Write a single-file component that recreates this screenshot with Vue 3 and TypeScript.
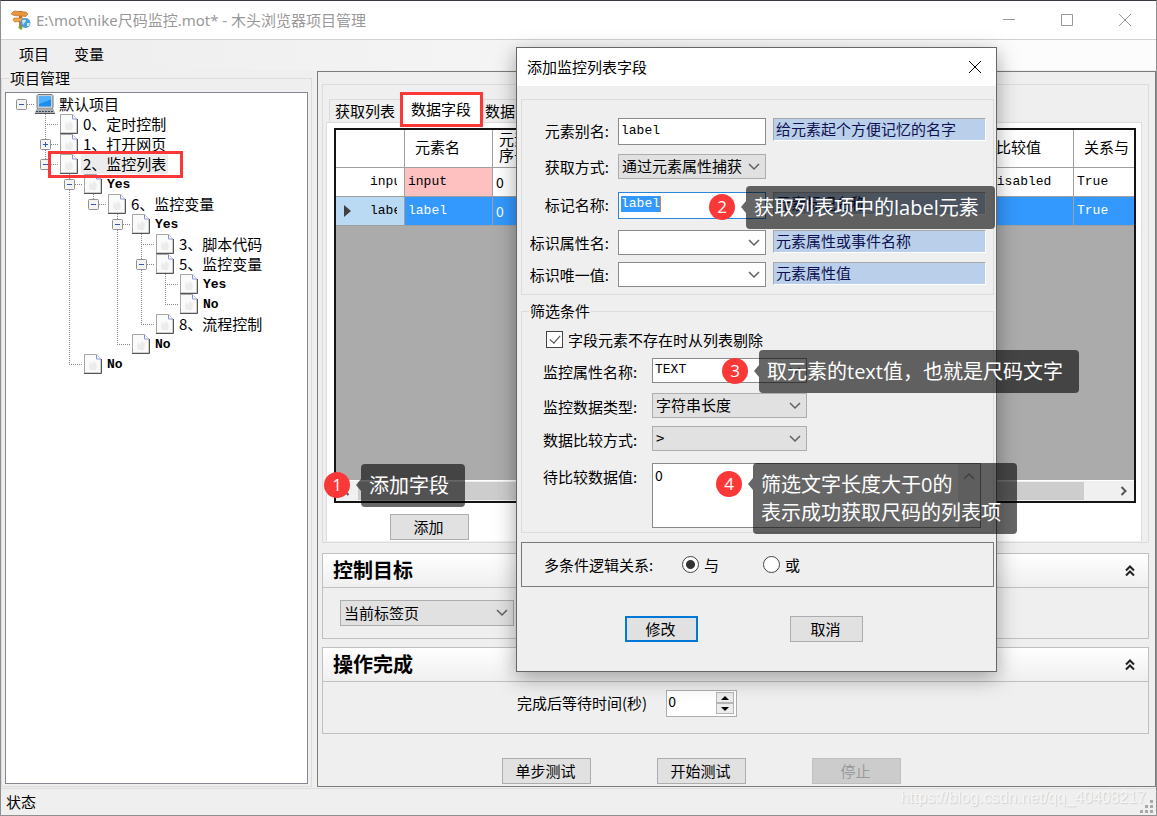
<script setup lang="ts">
import { ref } from 'vue'

interface TreeNode {
  depth: number
  label: string
  kind: 'root' | 'page'
  toggle?: 'plus' | 'minus'
  latin?: boolean
  current?: boolean
}

const nodes: TreeNode[] = [
  { depth: 0, label: '默认项目', kind: 'root', toggle: 'minus' },
  { depth: 1, label: '0、定时控制', kind: 'page' },
  { depth: 1, label: '1、打开网页', kind: 'page', toggle: 'plus' },
  { depth: 1, label: '2、监控列表', kind: 'page', toggle: 'minus', current: true },
  { depth: 2, label: 'Yes', kind: 'page', toggle: 'minus', latin: true },
  { depth: 3, label: '6、监控变量', kind: 'page', toggle: 'minus' },
  { depth: 4, label: 'Yes', kind: 'page', toggle: 'minus', latin: true },
  { depth: 5, label: '3、脚本代码', kind: 'page' },
  { depth: 5, label: '5、监控变量', kind: 'page', toggle: 'minus' },
  { depth: 6, label: 'Yes', kind: 'page', latin: true },
  { depth: 6, label: 'No', kind: 'page', latin: true },
  { depth: 5, label: '8、流程控制', kind: 'page' },
  { depth: 4, label: 'No', kind: 'page', latin: true },
  { depth: 2, label: 'No', kind: 'page', latin: true },
]

function continues(index: number, column: number): boolean {
  for (let i = index + 1; i < nodes.length; i++) {
    if (nodes[i].depth < column) return false
    if (nodes[i].depth === column) return true
  }
  return false
}

const rows = nodes.map((node, index) => ({
  ...node,
  guides: Array.from({ length: node.depth }, (_, column) => column > 0 && continues(index, column)),
  up: node.depth > 0,
  down: node.depth > 0 && continues(index, node.depth),
}))

const alias = ref('label')
const tagName = ref('label')
const attributeName = ref('TEXT')
const compareValue = ref('0')
const dropMissing = ref(true)
const logic = ref('and')
const waitSeconds = ref('0')
</script>

<template>
  <div class="window">
    <header class="titlebar">
      <svg class="app-icon" width="20" height="20" viewBox="0 0 20 20" aria-hidden="true">
        <path d="M8 1h3v17l-1.500 1.500L8 18z" fill="#c9752b" />
        <path d="M1 3l2-2 12 1 2 2-2 2.500L3 5.500 0 4z" fill="#e9953d" stroke="#b5651d" stroke-width=".6" />
        <path d="M3 8l9 0 1 3-9 1-2-2z" fill="#f0a54c" stroke="#b5651d" stroke-width=".6" />
        <circle cx="14.500" cy="13" r="5" fill="#4c9fd6" />
        <path d="M11 11c2-2 4-1 4 0s-2 1-2 3-2-1-2-3zM16 13l3 0-1 3-2 0z" fill="#c8e6f5" />
        <path d="M7 17l2-1 3 2-2 2z" fill="#7aa63a" />
      </svg>
      <h1>E:\mot\nike尺码监控.mot* - 木头浏览器项目管理</h1>
      <div class="caption-buttons">
        <button type="button" aria-label="最小化"><svg width="14" height="14" viewBox="0 0 14 14"><path d="M1 6.500h12" /></svg></button>
        <button type="button" aria-label="最大化"><svg width="14" height="14" viewBox="0 0 14 14"><path d="M1.500 1.500h11v11h-11z" /></svg></button>
        <button type="button" aria-label="关闭"><svg width="14" height="14" viewBox="0 0 14 14"><path d="M1 1l12 12M13 1L1 13" /></svg></button>
      </div>
    </header>

    <nav class="menu">
      <button type="button">项目</button>
      <button type="button">变量</button>
    </nav>

    <main class="main">
      <fieldset class="project">
        <legend>项目管理</legend>
        <ul class="tree" role="tree">
          <li v-for="(row, i) in rows" :key="i" role="treeitem" :aria-level="row.depth + 1">
            <span v-for="(line, g) in row.guides" :key="g" class="cell" :class="{ up: line, down: line }"></span>
            <span class="cell across" :class="{ up: row.up, down: row.down }">
              <svg v-if="row.toggle" class="toggle" width="11" height="11" viewBox="0 0 11 11">
                <rect x=".5" y=".5" width="10" height="10" rx="1" fill="#f4f4f4" stroke="#919191" />
                <path d="M3 5.500h5" stroke="#3458b0" />
                <path v-if="row.toggle === 'plus'" d="M5.500 3v5" stroke="#3458b0" />
              </svg>
            </span>
            <span class="icon">
              <svg v-if="row.kind === 'root'" width="20" height="20" viewBox="0 0 20 20">
                <path d="M3 .5h14l1 1v12l-1 1.500H3l-1-1.500v-12z" fill="#c9ced2" stroke="#707880" />
                <rect x="4" y="2.500" width="12" height="10" fill="#1c8fee" />
                <path d="M4 2.500h12v3L4 10z" fill="#4db2ff" />
                <path d="M1.500 15h17l1.500 4H0z" fill="#a9afb4" />
                <path d="M1 17.500h18" stroke="#3f464c" stroke-dasharray="2 1" />
                <path d="M0 19.500h20" stroke="#555" />
              </svg>
              <svg v-else width="18" height="20" viewBox="0 0 18 20">
                <path d="M.5.500h12l4.500 4.500v14H.5z" fill="#fafafa" stroke="#a5a5a5" />
                <path d="M5 13l1-5 2 2 2-3 3 4-1 5H6z" fill="#ececec" />
                <path d="M12.500.500v4.500H17" fill="#fff" stroke="#8b93d8" />
                <path d="M0 19.500h17.500M17.500 5v14.500" stroke="#555" fill="none" />
              </svg>
            </span>
            <span class="node-label" :class="{ latin: row.latin, current: row.current }">{{ row.label }}</span>
            <span v-if="row.current" class="marker"></span>
          </li>
        </ul>
      </fieldset>

      <section class="panel">
        <div class="group">
          <div class="tabs" role="tablist">
            <button type="button" role="tab">获取列表</button>
            <button type="button" role="tab" class="selected" aria-selected="true">数据字段</button>
            <button type="button" role="tab">数据</button>
          </div>
          <div class="tab-page">
            <div class="grid-frame">
              <table>
                <colgroup>
                  <col class="c-head" /><col class="c-std" /><col class="c-order" /><col /><col class="c-std" /><col class="c-logic" />
                </colgroup>
                <thead>
                  <tr><th></th><th>元素名</th><th class="wrap">元素序号</th><th></th><th>比较值</th><th>关系与</th></tr>
                </thead>
                <tbody>
                  <tr>
                    <th scope="row"><span class="row-head"><i></i><b>input</b></span></th>
                    <td class="pink">input</td><td class="digit">0</td><td></td><td>disabled</td><td>True</td>
                  </tr>
                  <tr class="active">
                    <th scope="row"><span class="row-head"><i><svg width="7" height="12" viewBox="0 0 7 12"><path d="M0 0l7 6-7 6z" fill="#404040" /></svg></i><b>label</b></span></th>
                    <td>label</td><td class="digit">0</td><td></td><td></td><td>True</td>
                  </tr>
                </tbody>
              </table>
              <div class="scrollbar">
                <svg width="9" height="10" viewBox="0 0 9 10"><path d="M6.500 1l-4 4 4 4" /></svg>
                <span class="track"><span class="thumb"></span></span>
                <svg width="9" height="10" viewBox="0 0 9 10"><path d="M2.500 1l4 4-4 4" /></svg>
              </div>
            </div>
            <button type="button" class="btn add">添加</button>
          </div>
          <div class="callout on-add">
            <span class="badge">1</span><span class="arrow"></span><p>添加字段</p>
          </div>
        </div>

        <section class="fold first">
          <header><h2>控制目标</h2>
            <svg width="10" height="12" viewBox="0 0 10 12"><path d="M1 5.500l4-4 4 4M1 10.500l4-4 4 4" /></svg>
          </header>
          <div class="fold-body target">
            <span class="combo grey">
              <select aria-label="控制目标"><option>当前标签页</option></select>
              <svg width="12" height="8" viewBox="0 0 12 8"><path d="M1 1l5 5 5-5" /></svg>
            </span>
          </div>
        </section>

        <section class="fold">
          <header><h2>操作完成</h2>
            <svg width="10" height="12" viewBox="0 0 10 12"><path d="M1 5.500l4-4 4 4M1 10.500l4-4 4 4" /></svg>
          </header>
          <div class="fold-body wait">
            <label for="wait">完成后等待时间(秒)</label>
            <span class="spinner">
              <input id="wait" v-model="waitSeconds" type="text" inputmode="numeric" />
              <span class="steps">
                <button type="button" aria-label="增加"><svg width="8" height="4" viewBox="0 0 8 4"><path d="M0 4l4-4 4 4z" /></svg></button>
                <button type="button" aria-label="减少"><svg width="8" height="4" viewBox="0 0 8 4"><path d="M0 0l4 4 4-4z" /></svg></button>
              </span>
            </span>
          </div>
        </section>

        <div class="actions">
          <button type="button" class="btn">单步测试</button>
          <button type="button" class="btn">开始测试</button>
          <button type="button" class="btn" disabled>停止</button>
        </div>
      </section>
    </main>

    <footer class="status">
      <span>状态</span>
      <span class="watermark">https://blog.csdn.net/qq_40408217</span>
      <svg class="grip" width="13" height="13" viewBox="0 0 13 13" fill="#a8a8a8">
        <path d="M10 0h3v3h-3zM5 5h3v3H5zM10 5h3v3h-3zM0 10h3v3H0zM5 10h3v3H5zM10 10h3v3h-3z" />
      </svg>
    </footer>

    <div class="dialog" role="dialog" aria-label="添加监控列表字段">
      <header>
        <h2>添加监控列表字段</h2>
        <button type="button" aria-label="关闭"><svg width="14" height="14" viewBox="0 0 14 14"><path d="M1 1l12 12M13 1L1 13" /></svg></button>
      </header>

      <div class="box element">
        <label for="alias">元素别名:</label>
        <input id="alias" v-model="alias" class="field" type="text" />
        <span class="hint">给元素起个方便记忆的名字</span>

        <label for="method">获取方式:</label>
        <span class="combo grey">
          <select id="method"><option>通过元素属性捕获</option></select>
          <svg width="12" height="8" viewBox="0 0 12 8"><path d="M1 1l5 5 5-5" /></svg>
        </span>
        <span></span>

        <label for="tag">标记名称:</label>
        <span class="field focused"><input id="tag" v-model="tagName" type="text" /></span>
        <span class="hint">元素标记名称</span>

        <label for="attr">标识属性名:</label>
        <span class="combo">
          <select id="attr"><option></option></select>
          <svg width="12" height="8" viewBox="0 0 12 8"><path d="M1 1l5 5 5-5" /></svg>
        </span>
        <span class="hint">元素属性或事件名称</span>

        <label for="unique">标识唯一值:</label>
        <span class="combo">
          <select id="unique"><option></option></select>
          <svg width="12" height="8" viewBox="0 0 12 8"><path d="M1 1l5 5 5-5" /></svg>
        </span>
        <span class="hint">元素属性值</span>
      </div>

      <fieldset class="box filter">
        <legend>筛选条件</legend>
        <label class="check"><input v-model="dropMissing" type="checkbox" />字段元素不存在时从列表剔除</label>
        <div class="filter-grid">
          <label for="watch">监控属性名称:</label>
          <span class="combo">
            <input id="watch" v-model="attributeName" type="text" />
            <svg width="12" height="8" viewBox="0 0 12 8"><path d="M1 1l5 5 5-5" /></svg>
          </span>
          <label for="dtype">监控数据类型:</label>
          <span class="combo grey">
            <select id="dtype"><option>字符串长度</option></select>
            <svg width="12" height="8" viewBox="0 0 12 8"><path d="M1 1l5 5 5-5" /></svg>
          </span>
          <label for="op">数据比较方式:</label>
          <span class="combo grey">
            <select id="op"><option>&gt;</option></select>
            <svg width="12" height="8" viewBox="0 0 12 8"><path d="M1 1l5 5 5-5" /></svg>
          </span>
          <label for="value">待比较数据值:</label>
          <span class="memo">
            <textarea id="value" v-model="compareValue"></textarea>
            <span class="memo-bar"><svg width="12" height="8" viewBox="0 0 12 8"><path d="M1 7l5-5 5 5" /></svg></span>
          </span>
        </div>
      </fieldset>

      <div class="logic" role="radiogroup" aria-label="多条件逻辑关系">
        <span>多条件逻辑关系:</span>
        <label><input v-model="logic" type="radio" name="logic" value="and" />与</label>
        <label><input v-model="logic" type="radio" name="logic" value="or" />或</label>
      </div>

      <footer>
        <button type="button" class="btn primary">修改</button>
        <button type="button" class="btn">取消</button>
      </footer>

      <div class="callout on-tag">
        <span class="badge">2</span><span class="arrow"></span><p>获取列表项中的label元素</p>
      </div>
      <div class="callout on-watch">
        <span class="badge">3</span><span class="arrow"></span><p>取元素的text值，也就是尺码文字</p>
      </div>
      <div class="callout on-value">
        <span class="badge">4</span><span class="arrow"></span><p>筛选文字长度大于0的<br />表示成功获取尺码的列表项</p>
      </div>
    </div>
  </div>
</template>

<style>
body {
  margin: 0;
}
</style>

<style scoped>
* {
  box-sizing: border-box;
}

.window {
  --mono: 'Liberation Mono', 'Noto Sans CJK SC', monospace;
  --ui: 'Noto Sans CJK SC', 'Noto Sans', sans-serif;
  position: relative;
  display: flex;
  flex-direction: column;
  min-height: 100vh;
  overflow: hidden;
  border: 1px solid #8f8f8f;
  border-top-color: #3c3842;
  background: #efefef;
  color: #000;
  font: 15px/16px var(--ui);
}

h1, h2, p, ul {
  margin: 0;
  padding: 0;
  font-weight: normal;
}

button, input, select, textarea {
  margin: 0;
  padding: 0;
  border: 0;
  border-radius: 0;
  background: none;
  color: inherit;
  font: inherit;
  outline: none;
}

fieldset {
  min-width: 0;
  margin: 0;
}

svg {
  display: block;
  flex: none;
}

/* title bar and menu */
.titlebar {
  display: flex;
  align-items: center;
  height: 39px;
  padding: 0 2px 0 10px;
  border-bottom: 1px solid #d2d2d2;
  background: #fff;
}

.titlebar h1 {
  flex: 1;
  margin-left: 5px;
  color: #999;
  font: 15px/20px 'Noto Sans', 'Noto Sans CJK SC', sans-serif;
}

.caption-buttons {
  display: flex;
}

.caption-buttons button {
  display: grid;
  place-items: center;
  width: 58px;
  height: 38px;
}

.caption-buttons path,
.dialog > header path {
  fill: none;
  stroke: #999;
}

.menu {
  display: flex;
  gap: 25px;
  height: 30px;
  padding-left: 18px;
  background: linear-gradient(90deg, #efefef 10%, #fcfcfc 90%);
}

.menu button {
  height: 28px;
}

/* project tree */
.main {
  display: flex;
  flex: 1;
  gap: 5px;
}

.project {
  display: flex;
  width: 311px;
  margin-bottom: 1px;
  padding: 6px 3px 2px;
  border: 1px solid #dcdcdc;
}

.project legend {
  height: 16px;
  margin-left: 4px;
  padding: 0 1px;
}

.tree {
  flex: 1;
  padding: 1px 0 0 3px;
  border: 1px solid #828790;
  background: #fff;
  list-style: none;
}

.tree li {
  position: relative;
  display: flex;
  height: 20px;
  line-height: 20px;
}

.cell {
  position: relative;
  display: grid;
  flex: none;
  place-items: center;
  width: 24px;
  height: 20px;
}

.cell::before,
.cell::after {
  content: '';
  position: absolute;
}

.cell.up::before {
  top: 0;
  left: 12px;
  width: 1px;
  height: 10px;
  background: repeating-linear-gradient(#888 0 1px, transparent 1px 2px);
}

.cell.up.down::before {
  height: 20px;
}

.cell.across::after {
  top: 10px;
  left: 12px;
  width: 14px;
  height: 1px;
  background: repeating-linear-gradient(90deg, #888 0 1px, transparent 1px 2px);
}

.toggle {
  position: relative;
  z-index: 1;
}

.icon {
  display: grid;
  flex: none;
  place-items: center;
  width: 24px;
}

.node-label {
  padding: 0 2px;
}

.node-label.latin {
  font-family: var(--mono);
  font-size: 13px;
  font-weight: bold;
  line-height: 22px;
}

.node-label.current {
  background: #ececec;
}

.marker {
  position: absolute;
  top: -3px;
  left: 39px;
  width: 135px;
  height: 27px;
  border: 3px solid #fb3838;
  z-index: 2;
}

/* right panel */
.panel {
  display: flex;
  flex: 1;
  flex-direction: column;
  min-width: 0;
  margin: 1px 0 1px;
  padding: 12px 6px 2px 4px;
  border: 1px solid #7c7c7c;
}

.group {
  position: relative;
  display: flex;
  flex: 1;
  flex-direction: column;
  padding: 9px 6px 1px 3px;
  border: 1px solid #dcdcdc;
}

.tabs {
  display: flex;
  align-items: flex-end;
  height: 28px;
  padding-left: 3px;
}

.tabs button {
  height: 23px;
  padding: 0 5px;
  border: 1px solid #dcdcdc;
  border-bottom: 0;
}

.tabs .selected {
  z-index: 1;
  height: 35px;
  margin: 0 0 -5px -1px;
  padding: 0 9px 2px 8px;
  border: 3px solid #fb3838;
  background: #fff;
}

.tabs button:last-child {
  padding: 0 1px;
}

.tab-page {
  display: flex;
  flex: 1;
  flex-direction: column;
  align-items: flex-start;
  padding: 5px 5px 1px 7px;
  border: 1px solid #dcdcdc;
  border-bottom: 0;
  background: #fff;
}

.grid-frame {
  display: flex;
  flex: 1;
  flex-direction: column;
  justify-content: space-between;
  align-self: stretch;
  border: 2px solid #141414;
  background: #ababab;
}

table {
  width: 100%;
  border-collapse: separate;
  border-spacing: 0;
  table-layout: fixed;
}

.c-head { width: 69px; }
.c-std { width: 88px; }
.c-order { width: 54px; }
.c-logic { width: 60px; }

th, td {
  overflow: hidden;
  height: 29px;
  padding: 0 3px;
  border-right: 1px solid #a0a0a0;
  border-bottom: 1px solid #a0a0a0;
  background: #fff;
  font-family: var(--mono);
  font-size: 13px;
  font-weight: normal;
  text-align: left;
  white-space: nowrap;
}

thead th {
  height: 38px;
  padding: 0 10px 3px;
  font-family: var(--ui);
  font-size: 15px;
}

thead th.wrap {
  padding: 0 6px 3px;
  white-space: normal;
}

tr > :last-child {
  border-right: 0;
}

.digit {
  font-family: var(--ui);
  font-size: 14px;
}

td.pink {
  background: #ffc0c0;
}

.active td {
  background: #3399ff;
  color: #fff;
}

.active th {
  background: #b9daf2;
}

.row-head {
  display: flex;
  align-items: center;
}

.row-head i {
  width: 26px;
  margin-left: 5px;
}

.row-head b {
  overflow: hidden;
  width: 27px;
  font-weight: normal;
}

.scrollbar {
  display: flex;
  align-items: center;
  height: 21px;
  padding: 0 6px;
  border-top: 1px solid #fff;
  background: #f0f0f0;
}

.scrollbar path {
  fill: none;
  stroke: #555;
  stroke-width: 2;
}

.track {
  flex: 1;
  height: 100%;
  padding: 1px 35px 1px 7px;
}

.thumb {
  display: block;
  height: 100%;
  background: #cdcdcd;
}

.btn {
  width: 89px;
  height: 26px;
  padding: 0 2px 1px 0;
  border: 1px solid #adadad;
  background: #e1e1e1;
}

.btn:disabled {
  border-color: #bfbfbf;
  background: #cccccc;
  color: #9a9a9a;
}

.btn.add {
  width: 79px;
  margin: 11px 0 0 56px;
}

/* collapsible sections */
.fold {
  margin-top: 8px;
  border: 1px solid #c0c0c0;
}

.fold.first {
  margin-top: 10px;
}

.fold header {
  display: flex;
  align-items: center;
  justify-content: space-between;
  height: 34px;
  padding: 0 13px 0 10px;
  border-bottom: 1px solid #c0c0c0;
  background: linear-gradient(#fff, #efefef);
}

.fold h2 {
  padding-bottom: 2px;
  font-size: 20px;
  font-weight: bold;
  line-height: 30px;
}

.fold header path {
  fill: none;
  stroke: #222;
  stroke-width: 2;
}

.fold-body {
  height: 51px;
}

.fold-body.target {
  height: 50px;
  padding: 12px 17px;
}

.target .combo {
  width: 174px;
  height: 26px;
}

.wait {
  display: flex;
  align-items: flex-start;
  gap: 19px;
  padding: 8px 0 0 194px;
}

.wait label {
  line-height: 26px;
}

.combo {
  display: grid;
  grid-template-columns: 1fr 22px;
  align-items: center;
  height: 25px;
  border: 1px solid #8a8a8a;
  background: #fff;
}

.combo select,
.combo input {
  grid-area: 1 / 1 / 2 / 3;
  width: 100%;
  height: 100%;
  padding: 0 22px 1px 3px;
  appearance: none;
}

.combo input {
  padding-left: 2px;
  padding-bottom: 3px;
  font-family: var(--mono);
  font-size: 13px;
}

.combo svg {
  grid-area: 1 / 2;
  justify-self: center;
  pointer-events: none;
}

.combo path,
.memo path {
  fill: none;
  stroke: #606060;
  stroke-width: 1.5;
}

.combo.grey {
  border-color: #adadad;
  background: #e1e1e1;
}

.spinner {
  display: flex;
  width: 71px;
  height: 27px;
  border: 1px solid #abadb3;
  background: #fff;
}

.spinner input {
  flex: 1;
  width: 0;
  height: 20px;
  padding-left: 1px;
  font-size: 14px;
}

.steps {
  display: grid;
  width: 20px;
  padding: 1px 2px 2px 0;
}

.steps button {
  display: grid;
  place-items: center;
  border: 1px solid #b5b5b5;
  background: #ececec;
}

.actions {
  display: flex;
  gap: 66px;
  padding: 24px 0 0 180px;
}

/* status bar */
.status {
  display: flex;
  align-items: center;
  height: 27px;
  padding: 0 3px 0 5px;
  border-top: 1px solid #dcdcdc;
}

.watermark {
  flex: 1;
  align-self: flex-start;
  margin-right: -6px;
  padding-top: 1px;
  color: #f6f6f6;
  font: 16px/16px 'Liberation Sans', sans-serif;
  text-align: right;
  text-shadow: 1px 1px 1px #d0d0d0;
}

.grip {
  align-self: flex-end;
  margin-bottom: 2px;
}

/* dialog */
.dialog {
  position: absolute;
  top: 46px;
  left: 515px;
  width: 481px;
  border: 1px solid #666;
  background: #efefef;
  box-shadow: 0 6px 20px rgba(0, 0, 0, 0.35);
}

.dialog > header {
  display: flex;
  align-items: center;
  justify-content: space-between;
  height: 38px;
  padding: 0 14px 0 10px;
  background: #fff;
}

.dialog > header h2 {
  font-size: 15px;
  line-height: 20px;
}

.dialog > header path {
  stroke: #000;
}

.box,
.logic {
  margin: 0 2px 0 4px;
}

.element {
  display: grid;
  grid-template-rows: 36px 38px 38px 32px 25px;
  grid-template-columns: 89px 148px 213px;
  column-gap: 7px;
  align-items: start;
  height: 196px;
  margin-top: 13px;
  padding-top: 18px;
  border: 1px solid #dcdcdc;
}

.element label {
  padding-right: 2px;
  line-height: 25px;
  text-align: right;
}

.field {
  height: 27px;
  border: 1px solid #8a8a8a;
  background: #fff;
}

input.field {
  padding: 0 2px 3px;
  font-family: var(--mono);
  font-size: 13px;
}

.field.focused {
  display: flex;
  align-items: flex-start;
  padding: 3px 2px;
  border-color: #2b86d9;
}

.field.focused input {
  width: 40px;
  height: 16px;
  border-right: 1px solid #d2843a;
  background: #3399ff;
  color: #fff;
  font-family: var(--mono);
  font-size: 13px;
}

.hint {
  height: 23px;
  padding-left: 2px;
  border: 1px solid #a8a8a8;
  border-right-color: #fff;
  border-bottom-color: #fff;
  background: #b9cfea;
  color: #0f0f50;
  line-height: 19px;
}

.filter {
  height: 230px;
  margin-top: 8px;
  padding: 12px 0 0 21px;
  border: 1px solid #dcdcdc;
}

.filter legend {
  height: 16px;
  margin-left: -14px;
  padding: 0 1px;
}

.check {
  display: flex;
  align-items: center;
  gap: 5px;
  height: 17px;
  padding-left: 3px;
}

.check input {
  width: 17px;
  height: 17px;
  border: 1px solid #444;
  background: #fff;
  appearance: none;
}

.check input:checked::before {
  content: '';
  display: block;
  width: 5px;
  height: 9px;
  margin: 1px 5px;
  border: solid #444;
  border-width: 0 1px 1px 0;
  transform: rotate(42deg);
}

.filter-grid {
  display: grid;
  grid-template-rows: 35px 33px 37px 66px;
  grid-template-columns: 97px 155px 1fr;
  column-gap: 12px;
  align-items: start;
  margin: 10px 12px 0 0;
}

.filter-grid label {
  grid-column: 1;
  line-height: 27px;
}

.filter-grid .memo {
  grid-column: 2 / 4;
}

.memo {
  display: flex;
  height: 65px;
  border: 1px solid #8a8a8a;
  background: #fff;
}

.memo textarea {
  flex: 1;
  padding: 3px 2px;
  font-size: 14px;
  resize: none;
}

.memo-bar {
  display: grid;
  justify-content: center;
  width: 22px;
  padding-top: 8px;
  background: #ececec;
}

.memo path {
  stroke: #a0a0a0;
}

.logic {
  display: flex;
  align-items: center;
  height: 45px;
  margin-top: 9px;
  padding-left: 22px;
  border: 1px solid #7a7a7a;
}

.logic span {
  width: 138px;
}

.logic label {
  display: flex;
  align-items: center;
  gap: 5px;
  width: 81px;
}

.logic input {
  width: 17px;
  height: 17px;
  border: 1px solid #444;
  border-radius: 50%;
  background: #fff;
  appearance: none;
}

.logic input:checked {
  background: radial-gradient(circle, #333 0 4px, #fff 5px);
}

.dialog > footer {
  display: flex;
  gap: 92px;
  padding: 29px 0 29px 108px;
}

.dialog .btn {
  width: 73px;
}

.dialog .btn.primary {
  border: 2px solid #0078d7;
}

/* numbered callouts */
.callout {
  position: absolute;
  z-index: 2;
  display: flex;
  align-items: flex-start;
}

.callout .badge {
  width: 26px;
  height: 26px;
  margin-top: 8px;
  border-radius: 50%;
  background: #fb3838;
  color: #fff;
  font: 17px/25px 'Open Sans', sans-serif;
  text-align: center;
}

.callout .arrow {
  width: 0;
  height: 0;
  margin: 15px 0 0 6px;
  border: solid transparent;
  border-width: 6px 5px 6px 0;
  border-right-color: rgba(0, 0, 0, 0.6);
}

.callout p {
  padding: 8px 16px 7px 8px;
  border-radius: 4px;
  background: rgba(0, 0, 0, 0.6);
  color: #fff;
  font: 20px/28px 'Open Sans', 'Noto Sans CJK SC', sans-serif;
  white-space: nowrap;
}

.on-add { top: 379px; left: 1px; }
.on-tag { top: 138px; left: 192px; }
.on-watch { top: 302px; left: 205px; }
.on-value { top: 415px; left: 199px; }
</style>
